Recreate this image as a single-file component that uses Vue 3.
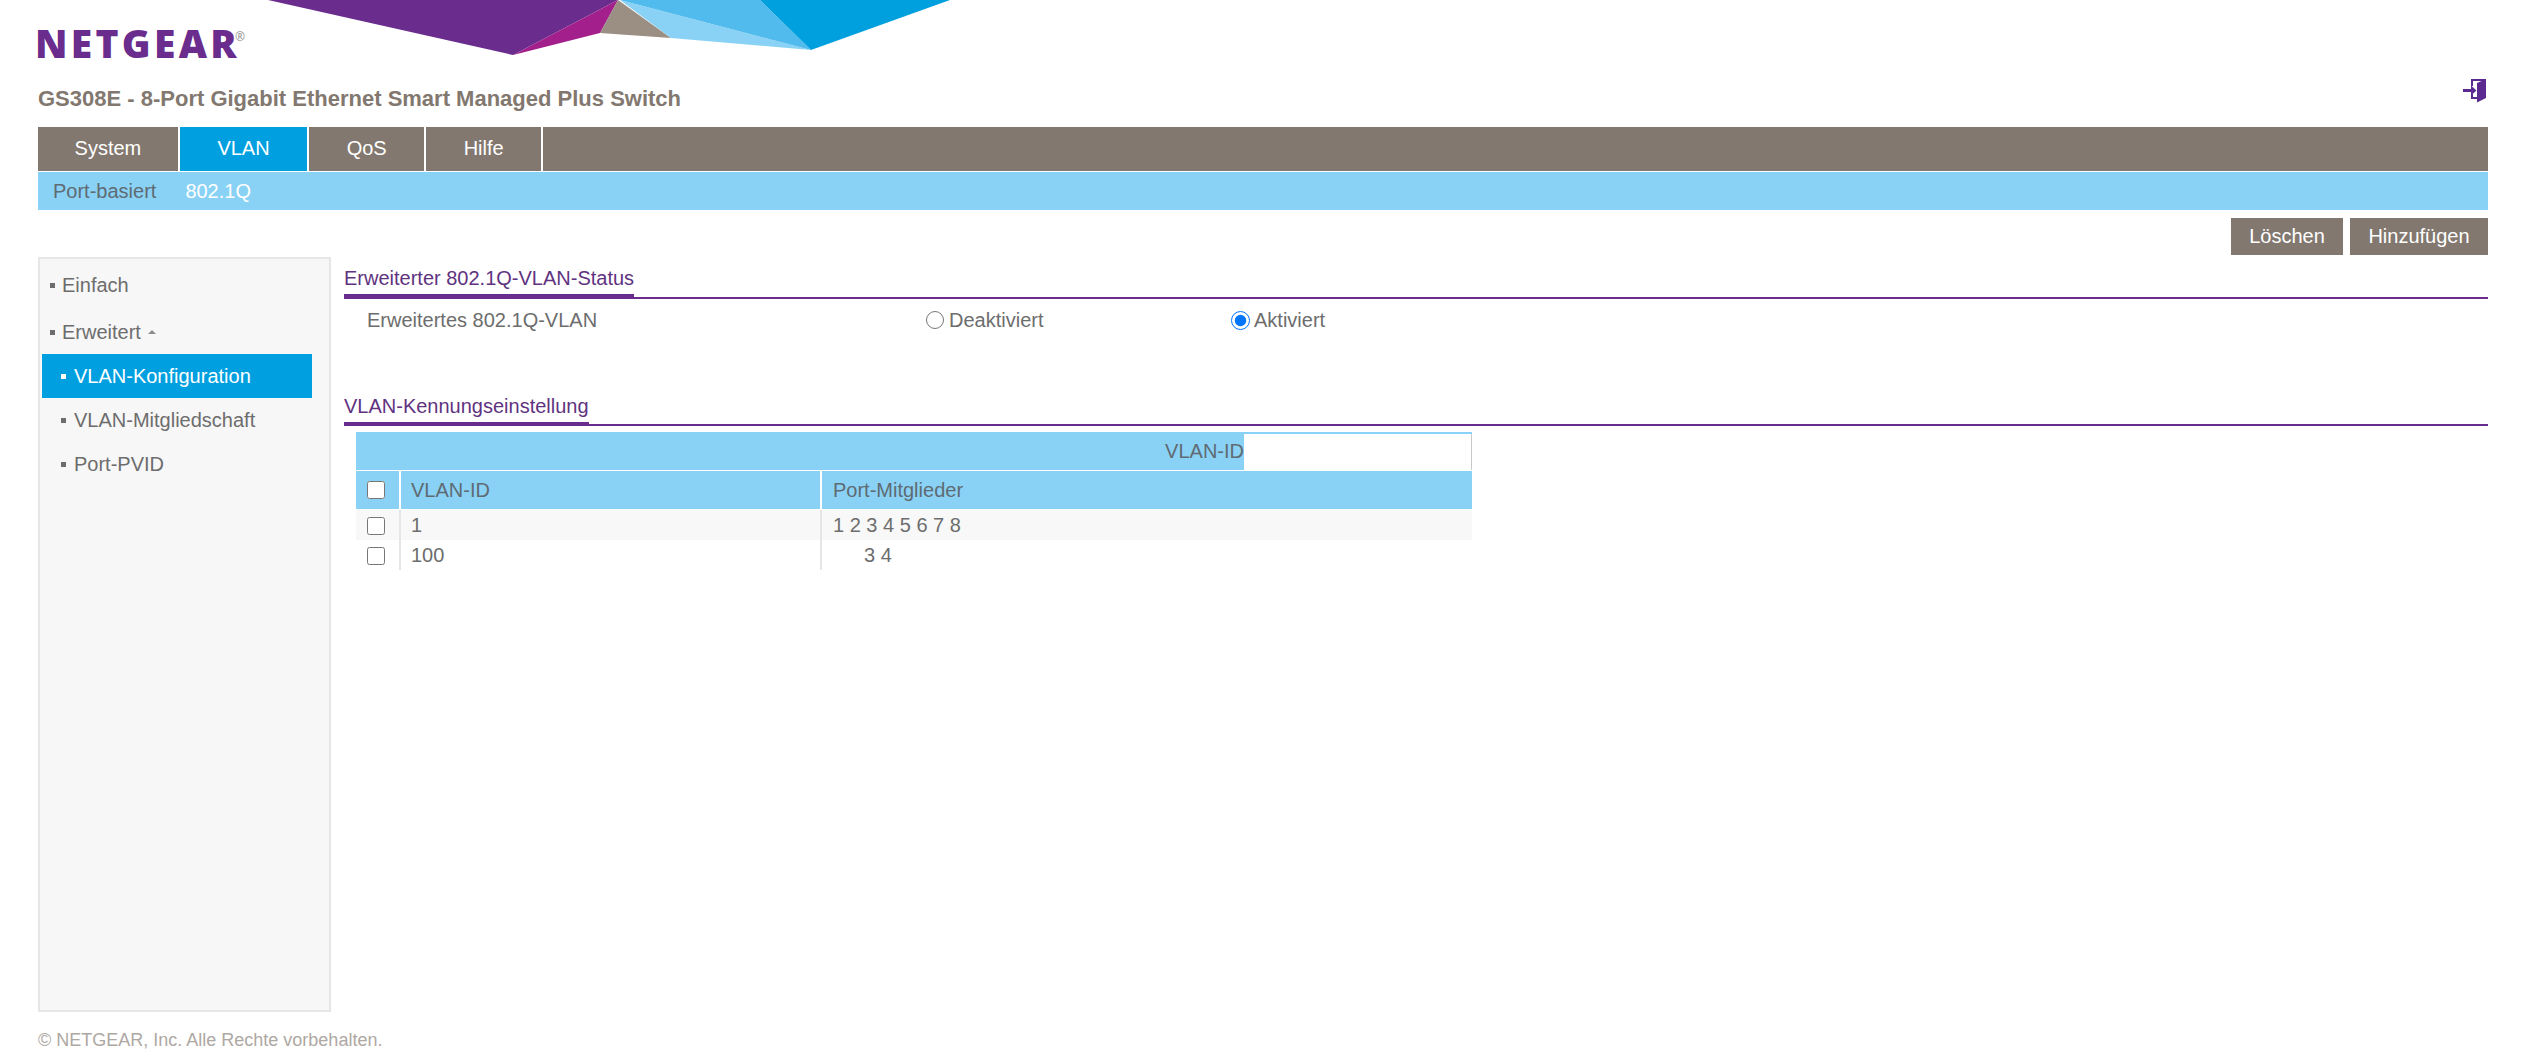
<script setup>
const tabs = [
  { label: 'System' },
  { label: 'VLAN', active: true },
  { label: 'QoS' },
  { label: 'Hilfe' }
]
const rows = [
  { id: '1', ports: '1 2 3 4 5 6 7 8' },
  { id: '100', ports: '3 4', offset: true }
]
</script>

<template>
  <div class="page">
    <svg class="banner" width="700" height="60" viewBox="260 0 700 60" aria-hidden="true">
      <polygon points="268,0 618,0 513,55" fill="#6a2c8d" />
      <polygon points="618,0 600,33 513,55" fill="#a31f8c" />
      <polygon points="618,0 600,33 671,38" fill="#9b8e82" />
      <polygon points="620,0 671,38 811,50" fill="#8ad2f5" />
      <polygon points="620,0 760,0 811,50" fill="#52bbed" />
      <polygon points="760,0 950,0 811,50" fill="#009fde" />
    </svg>

    <header class="head">
      <div class="logo">NETGEAR<sup>®</sup></div>
      <div class="title-row">
        <h1>GS308E - 8-Port Gigabit Ethernet Smart Managed Plus Switch</h1>
        <svg class="logout" width="24" height="25" viewBox="0 0 24 25" aria-hidden="true">
          <path d="M14 5 23 1V20L14 24.500Z" fill="#5b2a91" />
          <path d="M8 1H23V3H10V8H8ZM8 16H10V19H14V21H8Z" fill="#5b2a91" />
          <path d="M0 11H8V7.500L13.500 12.500 8 17.500V14H0Z" fill="#5b2a91" />
        </svg>
      </div>
    </header>

    <nav class="tabs">
      <a v-for="t in tabs" :key="t.label" class="tab" :class="{ active: t.active }">{{ t.label }}</a>
    </nav>
    <nav class="subtabs">
      <a class="sub">Port-basiert</a>
      <a class="sub current">802.1Q</a>
    </nav>

    <div class="actions">
      <button class="btn del">Löschen</button>
      <button class="btn add">Hinzufügen</button>
    </div>

    <div class="body">
      <aside class="side">
        <div class="item top"><i class="dot"></i>Einfach</div>
        <div class="item top second">
          <i class="dot"></i>Erweitert
          <svg class="caret" width="10" height="6" viewBox="0 0 10 6" aria-hidden="true"><path d="M5 1 9 5H1z" fill="#8c8c8c" /></svg>
        </div>
        <div class="item child active"><i class="dot"></i>VLAN-Konfiguration</div>
        <div class="item child"><i class="dot"></i>VLAN-Mitgliedschaft</div>
        <div class="item child"><i class="dot"></i>Port-PVID</div>
      </aside>

      <main class="main">
        <section class="sec-one">
          <h2 class="sec-title thick"><span>Erweiterter 802.1Q-VLAN-Status</span></h2>
          <div class="status">
            <span>Erweitertes 802.1Q-VLAN</span>
            <label class="radio"><input type="radio" name="adv" />Deaktiviert</label>
            <label class="radio on"><input type="radio" name="adv" checked />Aktiviert</label>
          </div>
        </section>

        <section class="sec-two">
          <h2 class="sec-title"><span>VLAN-Kennungseinstellung</span></h2>
          <div class="table">
            <div class="filter">
              <span class="filter-label">VLAN-ID</span>
              <input class="filter-input" type="text" />
            </div>
            <div class="row header">
              <div class="c check"><input type="checkbox" /></div>
              <div class="c">VLAN-ID</div>
              <div class="c ports">Port-Mitglieder</div>
            </div>
            <div v-for="(r, i) in rows" :key="r.id" class="row data" :class="{ odd: i === 0 }">
              <div class="c check"><input type="checkbox" /></div>
              <div class="c">{{ r.id }}</div>
              <div class="c ports" :class="{ offset: r.offset }">{{ r.ports }}</div>
            </div>
          </div>
        </section>
      </main>
    </div>

    <footer class="foot">© NETGEAR, Inc. Alle Rechte vorbehalten.</footer>
  </div>
</template>

<style scoped>
.page {
  position: relative;
  height: 1062px;
  box-sizing: border-box;
  padding: 0 35px 0 38px;
  overflow: hidden;
  background: #fff;
  font-family: "Liberation Sans", Arial, sans-serif;
  font-size: 20px;
  color: #6d6d6d;
}
.banner {
  position: absolute;
  left: 260px;
  top: 0;
}
.head {
  height: 127px;
}
.logo {
  padding-top: 21px;
  margin-left: -3px;
  height: 43px;
  line-height: 43px;
  font-family: "Open Sans", sans-serif;
  font-weight: 800;
  font-size: 39px;
  letter-spacing: 3.300px;
  color: #6a2c8d;
}
.logo sup {
  display: inline-block;
  vertical-align: top;
  margin: -6px 0 0 -5px;
  font-size: 12px;
  font-weight: 400;
  letter-spacing: 0;
  color: #8d8d8d;
}
.title-row {
  display: flex;
  justify-content: space-between;
  align-items: flex-start;
  margin-top: 14px;
}
h1 {
  margin: 6px 0 0;
  font-size: 22px;
  line-height: 30px;
  font-weight: 700;
  color: #82786f;
}
.logout {
  display: block;
  margin-right: 1px;
}
.tabs {
  display: flex;
  height: 44px;
  background: #82786f;
  border-bottom: 1px solid #fff;
  box-sizing: content-box;
}
.tab {
  padding: 0 37.500px;
  line-height: 42px;
  color: #fff;
  border-right: 2px solid #fff;
}
.tab:first-child {
  padding: 0 36.600px;
}
.tab.active {
  background: #009fdf;
}
.subtabs {
  display: flex;
  align-items: center;
  height: 38px;
  background: #89d2f5;
  padding-left: 15px;
  gap: 29px;
}
.sub {
  color: #5f6b73;
}
.sub.current {
  color: #fff;
}
.actions {
  display: flex;
  justify-content: flex-end;
  gap: 7px;
  margin-top: 8px;
}
.btn {
  height: 37px;
  border: 0;
  padding: 0;
  background: #82786f;
  color: #fff;
  font: inherit;
}
.del {
  width: 112px;
}
.add {
  width: 138px;
}
.body {
  display: flex;
  align-items: flex-start;
  gap: 13px;
  margin-top: 2px;
}
.side {
  flex: none;
  box-sizing: border-box;
  width: 293px;
  height: 755px;
  background: #f7f7f7;
  border: 2px solid #e6e6e6;
  padding-top: 9px;
}
.item {
  display: flex;
  align-items: center;
  color: #6d6d6d;
}
.top {
  height: 34px;
  padding-left: 10px;
}
.second {
  margin-top: 13px;
}
.child {
  height: 44px;
  margin-left: 2px;
  margin-right: 17px;
  padding-left: 19px;
}
.child .dot {
  margin-right: 8px;
}
.second + .child {
  margin-top: 5px;
}
.active {
  background: #009fdf;
  color: #fff;
}
.dot {
  flex: none;
  width: 5px;
  height: 5px;
  margin-right: 7px;
  background: currentColor;
}
.caret {
  margin-left: 6px;
}
.main {
  flex: 1;
  min-width: 0;
  padding-top: 6px;
}
.sec-title {
  display: flex;
  margin: 0;
  font-size: 20px;
  font-weight: 400;
  line-height: 31px;
  color: #5f3380;
  border-bottom: 2px solid #6a2c8d;
}
.sec-title span {
  display: block;
  border-bottom: 4px solid #6a2c8d;
  margin-bottom: -2px;
}
.thick span {
  margin-bottom: -1px;
}
.status {
  display: grid;
  grid-template-columns: 559px 305px auto;
  align-items: center;
  padding: 6px 0 0 23px;
  height: 30px;
}
.radio {
  display: flex;
  align-items: center;
  gap: 5px;
}
.radio input {
  width: 18px;
  height: 18px;
  margin: 0;
}
.radio.on {
  gap: 4px;
}
.radio.on input {
  width: 19px;
  height: 19px;
}
.sec-two {
  margin-top: 56px;
}
.table {
  width: 1116px;
  margin: 6px 0 0 12px;
}
.filter {
  display: flex;
  justify-content: flex-end;
  align-items: center;
  height: 38px;
  background: #89d2f5;
  color: #5f6b73;
}
.filter-input {
  box-sizing: border-box;
  width: 228px;
  height: 36px;
  margin-top: 2px;
  border: 0;
  border-right: 1px solid #c9c9c9;
  background: #fff;
}
.row {
  display: grid;
  grid-template-columns: 43px 421px 1fr;
}
.c {
  display: flex;
  align-items: center;
  padding-left: 10px;
  border-left: 2px solid #e6e6e6;
}
.c:first-child {
  border-left: 0;
}
.ports {
  padding-left: 11px;
}
.check {
  padding-left: 11px;
}
.check input {
  width: 18px;
  height: 18px;
  margin: 0;
}
.data .check input {
  margin-top: 2px;
}
.header {
  height: 38px;
  margin-top: 1px;
  margin-bottom: 1px;
  background: #89d2f5;
  color: #5f6b73;
}
.header .c {
  border-left-color: #fff;
}
.data {
  height: 30px;
}
.odd {
  background: #f8f8f8;
}
.ports.offset {
  padding-left: 42px;
}
.foot {
  margin-top: 18px;
  font-size: 18px;
  line-height: 20px;
  color: #aea8a3;
}
</style>
